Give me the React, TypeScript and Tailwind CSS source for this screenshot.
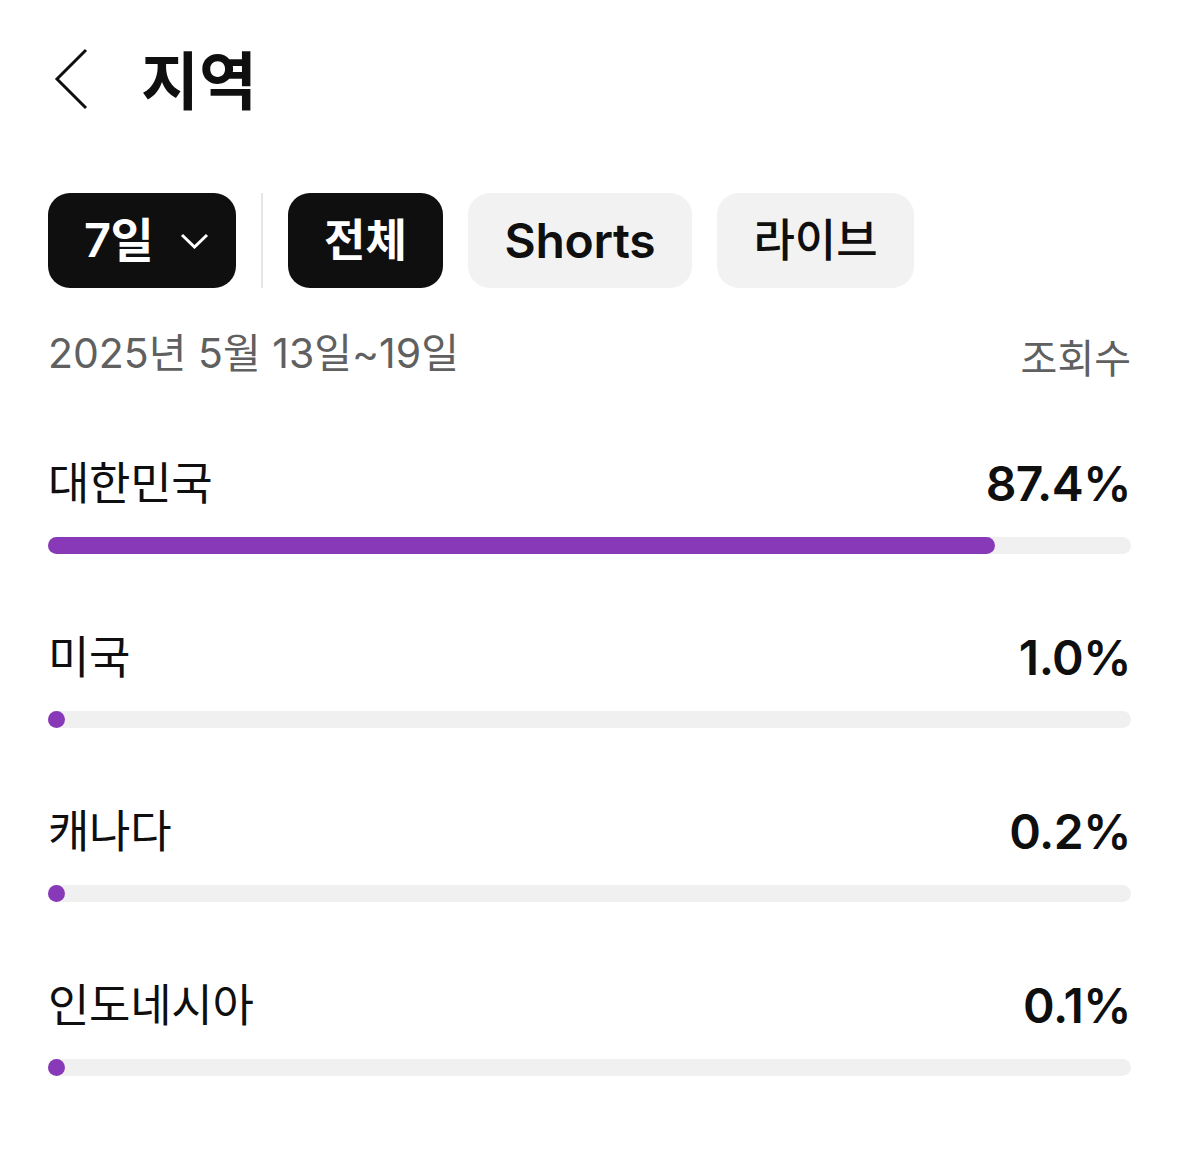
type Region = {
  name: string
  pct: number
}

const regions: Region[] = [
  { name: "대한민국", pct: 87.4 },
  { name: "미국", pct: 1.0 },
  { name: "캐나다", pct: 0.2 },
  { name: "인도네시아", pct: 0.1 },
]

const font = { fontFamily: '"Inter", "Noto Sans CJK KR", sans-serif' }

function RegionRow({ region }: { region: Region }) {
  return (
    <div className="flex flex-col">
      <div className="flex items-center justify-between h-[60px]">
        <span className="text-[45px] text-[#0f0f0f] tracking-[-0.3px]">{region.name}</span>
        <span className="text-[48px] font-semibold text-[#0f0f0f] tracking-[-0.5px]">
          {region.pct.toFixed(1)}%
        </span>
      </div>
      <div className="mt-[23px] h-[17px] w-full rounded-full bg-[#f0f0f0] flex">
        <div
          className="h-[17px] min-w-[17px] rounded-full bg-[#8839b8]"
          style={{ width: `${region.pct}%` }}
        />
      </div>
    </div>
  )
}

export default function App() {
  return (
    <div className="w-[1179px] h-[1166px] bg-white px-[48px] pt-[48px]" style={font}>
      <div className="flex items-center h-[62px]">
        <svg width="40" height="62" viewBox="0 0 40 62" className="ml-[4px]">
          <path d="M34 2 L5 31 L34 60" fill="none" stroke="#0f0f0f" strokeWidth="3" />
        </svg>
        <h1 className="ml-[49px] mt-[4px] text-[63px] font-bold text-[#0f0f0f] leading-none">
          지역
        </h1>
      </div>

      <div className="mt-[83px] flex items-stretch h-[95px]">
        <button className="flex items-center bg-[#0f0f0f] text-white rounded-[22px] pl-[36px] w-[188px]">
          <span className="text-[47px] font-semibold tracking-[-0.5px]">7일</span>
          <svg width="29" height="16" viewBox="0 0 29 16" className="ml-[27px]">
            <path d="M2 2 L14.5 14 L27 2" fill="none" stroke="#ffffff" strokeWidth="3" />
          </svg>
        </button>
        <div className="w-[2px] bg-[#e5e5e5] ml-[25px] mr-[25px]" />
        <button className="flex items-center justify-center bg-[#0f0f0f] text-white rounded-[22px] w-[155px]">
          <span className="text-[45px] font-semibold">전체</span>
        </button>
        <button className="ml-[25px] flex items-center justify-center bg-[#f2f2f2] text-[#0f0f0f] rounded-[22px] w-[224px]">
          <span className="text-[48px] font-semibold tracking-[-0.3px]">Shorts</span>
        </button>
        <button className="ml-[25px] flex items-center justify-center bg-[#f2f2f2] text-[#0f0f0f] rounded-[22px] w-[197px]">
          <span className="text-[45px] font-medium">라이브</span>
        </button>
      </div>

      <div className="mt-[38px] flex items-center justify-between h-[56px]">
        <span className="text-[41px] text-[#606060]">2025년 5월 13일~19일</span>
        <span className="text-[40px] text-[#606060] mt-[10px]">조회수</span>
      </div>

      <div className="mt-[72px] flex flex-col gap-[74px]">
        {regions.map(r => (
          <RegionRow key={r.name} region={r} />
        ))}
      </div>
    </div>
  )
}
